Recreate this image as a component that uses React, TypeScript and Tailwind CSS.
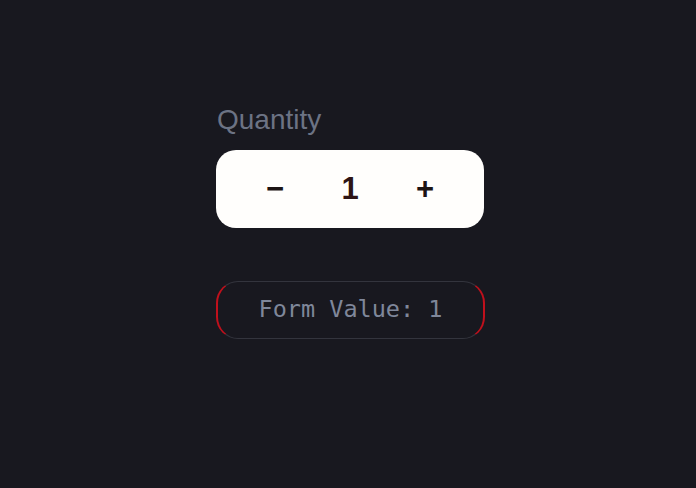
export default function App() {
  return (
    <div className="min-h-screen bg-[#18181f] flex justify-center pt-[104px]">
      <div className="flex flex-col w-[268px] ml-[4px]">
        <label className="text-[28px] leading-[32px] text-[#6c7384] font-['Liberation_Sans',Arial,sans-serif] pl-[1px]">
          Quantity
        </label>
        <div className="mt-[14px] h-[78px] bg-[#fffefc] rounded-[20px] flex items-center justify-center font-['Liberation_Sans',Arial,sans-serif] font-bold text-[31px] text-[#1c1414]">
          <button type="button" className="w-[75px] text-center">−</button>
          <span className="w-[75px] text-center text-[#2e1414]">1</span>
          <button type="button" className="w-[75px] text-center">+</button>
        </div>
        <div className="mt-[53px] h-[58px] w-[269px] rounded-[22px] border border-y-[#33343d] border-x-2 border-x-[#c0101c] flex items-center justify-center">
          <span className="font-['DejaVu_Sans_Mono',monospace] text-[23.5px] text-[#7f879a]">
            Form Value: 1
          </span>
        </div>
      </div>
    </div>
  );
}
